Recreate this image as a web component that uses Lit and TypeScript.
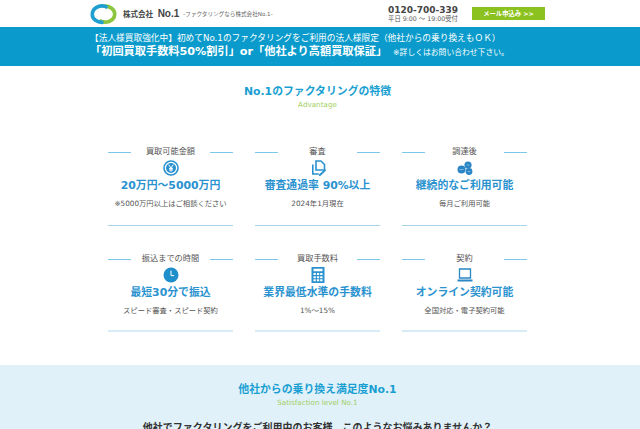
import { LitElement, html, css, svg } from "lit";
import { customElement } from "lit/decorators.js";

const icons: Record<string, unknown> = {
  yen: svg`<circle cx="8" cy="8" r="7" fill="#fff" stroke="#2a92cf" stroke-width="1.6"/><circle cx="8" cy="8" r="5" fill="#2a92cf"/><path d="M5.6 4.6 8 8l2.4-3.4M8 8v3.6M6 8.4h4M6 10h4" fill="none" stroke="#fff" stroke-width="1"/>`,
  docs: svg`<path d="M6 1h5l3.500 3.500V10H6z" fill="#fff" stroke="#2a92cf" stroke-width="1.600"/><path d="M2.800 4.500V14h6" fill="none" stroke="#2a92cf" stroke-width="1.600"/><path d="m9 14.500 6-5.500 1.200 1.400-5.500 5.300-1.900.2z" fill="#2a92cf"/>`,
  coins: svg`<circle cx="4.500" cy="9.500" r="4" fill="#2a86c4"/><circle cx="11" cy="5" r="3.600" fill="#2a86c4"/><circle cx="12" cy="11.500" r="3.400" fill="#2a86c4"/><path d="M2.500 9.500h4M9.500 5h3M10.500 11.500h3" stroke="#8cc4e6" stroke-width=".8"/>`,
  clock: svg`<circle cx="8" cy="8" r="7.500" fill="#1f8fcc"/><path d="M8 3.600V8.600h3.200" fill="none" stroke="#fff" stroke-width="1"/>`,
  calc: svg`<path fill-rule="evenodd" d="M1.500 0h13v16h-13zM3.500 1.800v2.400h9V1.800zM3.500 6v2h2.300V6zm3.400 0v2h2.300V6zm3.300 0v2h2.300V6zM3.500 9.200v2h2.300v-2zm3.400 0v2h2.300v-2zm3.300 0v2h2.300v-2zM3.500 12.300v2h2.300v-2zm3.400 0v2h2.300v-2zm3.300 0v2h2.300v-2z" fill="#2a92cf"/>`,
  laptop: svg`<path d="M2.500 2h11v9h-11z" fill="#fff" stroke="#2a86c4" stroke-width="1.300"/><path d="M.5 12.500h15V14.500H.5z" fill="#2a86c4"/>`,
};

const cards = [
  { label: "買取可能金額", icon: "yen", title: "20万円～5000万円", note: "※5000万円以上はご相談ください" },
  { label: "審査", icon: "docs", title: "審査通過率 90%以上", note: "2024年1月現在" },
  { label: "調達後", icon: "coins", title: "継続的なご利用可能", note: "毎月ご利用可能" },
  { label: "振込までの時間", icon: "clock", title: "最短30分で振込", note: "スピード審査・スピード契約" },
  { label: "買取手数料", icon: "calc", title: "業界最低水準の手数料", note: "1%～15%" },
  { label: "契約", icon: "laptop", title: "オンライン契約可能", note: "全国対応・電子契約可能" },
];

@customElement("app-root")
export class AppRoot extends LitElement {
  static styles = css`
    :host {
      display: block;
      height: 429px;
      overflow: hidden;
      background: #fff;
      font-family: "DejaVu Sans", "Noto Sans CJK JP", sans-serif;
      color: #444;
    }
    .top {
      height: 27px;
      width: 455px;
      margin-left: 90px;
      display: flex;
      align-items: center;
    }
    .logo { width: 27px; height: 22px; flex: none; }
    .company { margin-left: 6px; font-size: 7.500px; font-weight: 700; color: #444; white-space: nowrap; }
    .company b { font-family: "Liberation Sans", sans-serif; font-size: 10px; margin-left: 2px; }
    .tag { margin-left: 4px; font-size: 5.600px; color: #666; white-space: nowrap; }
    .tel { margin-left: auto; display: flex; flex-direction: column; align-items: center; width: 72px; }
    .tel b { font-size: 9px; color: #444; line-height: 9px; white-space: nowrap; }
    .tel span { font-size: 6.300px; color: #555; white-space: nowrap; line-height: 7px; }
    .cta {
      margin-left: 13px;
      width: 73px;
      height: 13px;
      background: #8cc220;
      color: #fff;
      font-size: 6.300px;
      font-weight: 700;
      display: flex;
      align-items: center;
      justify-content: center;
      white-space: nowrap;
    }
    .banner {
      height: 39px;
      background: #0a9bcc;
      color: #fff;
      padding: 5px 0 0 90px;
      box-sizing: border-box;
    }
    .b1 { font-size: 8.700px; line-height: 12px; white-space: nowrap; }
    .b2 { font-size: 11.200px; line-height: 16px; font-weight: 700; white-space: nowrap; }
    .b2 small { font-size: 7.800px; font-weight: 400; margin-left: 6px; }
    .head { text-align: center; padding-right: 5px; }
    .adv { padding-top: 19px; height: 58px; box-sizing: border-box; }
    .head h2 { margin: 0; font-size: 10.850px; line-height: 14px; color: #1a9fd2; font-weight: 700; }
    .head p { margin: 0; font-size: 7.200px; line-height: 12px; color: #a3cf62; }
    .grid {
      margin: 23px 0 0 108px;
      display: grid;
      grid-template-columns: repeat(3, 125px);
      column-gap: 22px;
      row-gap: 28px;
    }
    .card { height: 79px; box-sizing: border-box; border-bottom: 1px solid #a8d4ea; display: flex; flex-direction: column; align-items: center; }
    .card.r2 { height: 78px; border-bottom: 2px solid #d8ecf8; }
    .label { align-self: stretch; display: flex; align-items: center; justify-content: space-between; font-size: 8.200px; line-height: 9px; color: #555; white-space: nowrap; }
    .label::before, .label::after { content: ""; flex: none; width: 23px; height: 1px; background: #7cc8e8; margin-top: 2px; }
    .icon { width: 16px; height: 16px; margin-top: 4px; flex: none; }
    .title { margin-top: 3px; font-size: 10.850px; line-height: 14px; font-weight: 700; color: #2a92cf; white-space: nowrap; }
    .note { margin-top: 6px; font-size: 7.300px; line-height: 9px; color: #555; white-space: nowrap; }
    .sat {
      margin-top: 33px;
      background: #e0f1fa;
      height: 70px;
      padding-top: 18px;
      box-sizing: border-box;
      overflow: hidden;
    }
    .sat h3 { margin: 12px 0 0; font-size: 10px; line-height: 14px; font-weight: 700; color: #333; white-space: nowrap; text-align: center; }
  `;

  render() {
    return html`
      <div class="top">
        <svg class="logo" viewBox="0 0 27 22">
          <path d="M9.500 17.500c6 3.500 14.500 1 15.200-6 .4-5-5-9-11.200-8.300" fill="none" stroke="#8cc63f" stroke-width="3.600"/>
          <path d="M17.500 4.500C11.500 1 2.800 3.800 2.300 11c-.3 5 5 9 11.200 8.300" fill="none" stroke="#1f9fcf" stroke-width="3.600"/>
        </svg>
        <div class="company">株式会社 <b>No.1</b></div>
        <div class="tag">-ファクタリングなら株式会社No.1-</div>
        <div class="tel"><b>0120-700-339</b><span>平日 9:00 ～ 19:00受付</span></div>
        <div class="cta">メール申込み &gt;&gt;</div>
      </div>
      <div class="banner">
        <div class="b1">【法人様買取強化中】初めてNo.1のファクタリングをご利用の法人様限定（他社からの乗り換えもＯＫ）</div>
        <div class="b2">「初回買取手数料50%割引」or「他社より高額買取保証」<small>※詳しくはお問い合わせ下さい。</small></div>
      </div>
      <div class="head adv">
        <h2>No.1のファクタリングの特徴</h2>
        <p>Advantage</p>
      </div>
      <div class="grid">
        ${cards.map(
          (c, i) => html`
            <div class="card ${i > 2 ? "r2" : ""}">
              <div class="label"><span>${c.label}</span></div>
              <svg class="icon" viewBox="0 0 16 16">${icons[c.icon]}</svg>
              <div class="title">${c.title}</div>
              <div class="note">${c.note}</div>
            </div>
          `
        )}
      </div>
      <div class="sat head">
        <h2>他社からの乗り換え満足度No.1</h2>
        <p>Satisfaction level No.1</p>
        <h3>他社でファクタリングをご利用中のお客様、このようなお悩みありませんか？</h3>
      </div>
    `;
  }
}
